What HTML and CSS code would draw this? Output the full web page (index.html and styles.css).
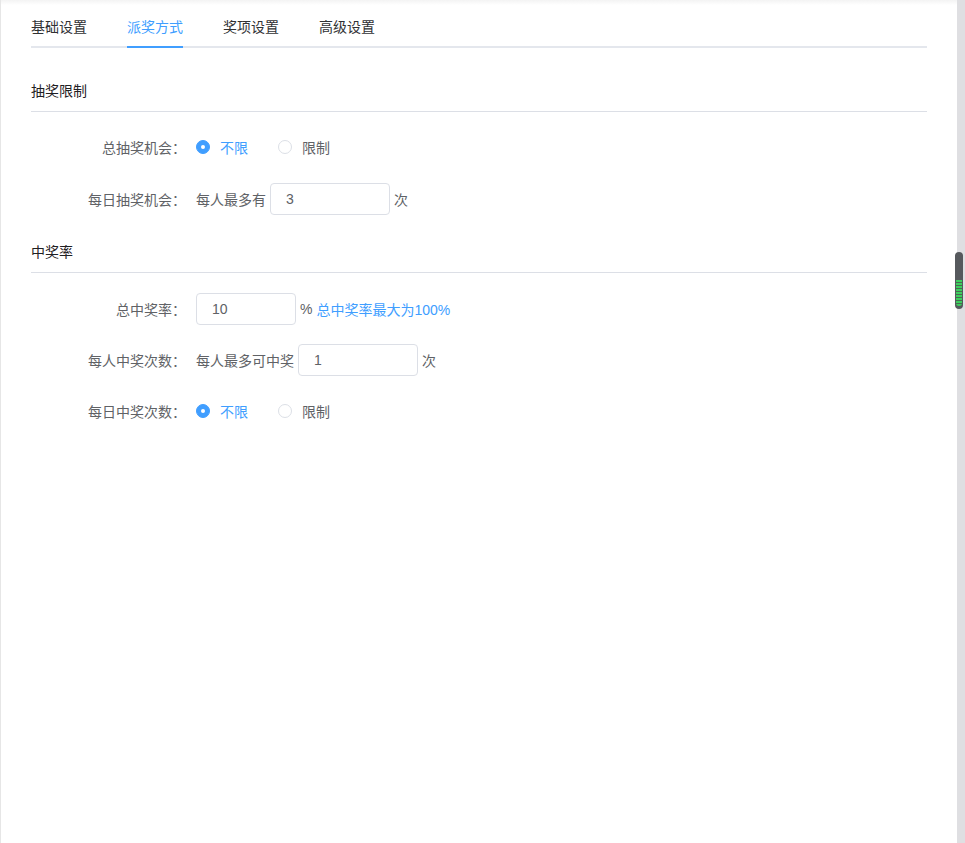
FILE: index.html
```html
<!DOCTYPE html>
<html lang="zh">
<head>
<meta charset="utf-8">
<title>派奖方式</title>
<link rel="stylesheet" href="styles.css">
</head>
<body>
<div class="page">
  <div class="main">
    <div class="tabs">
      <div class="tab">基础设置</div>
      <div class="tab active">派奖方式</div>
      <div class="tab">奖项设置</div>
      <div class="tab">高级设置</div>
    </div>

    <div class="section first">
      <div class="section-title">抽奖限制</div>
      <div class="form-item wide">
        <div class="label">总抽奖机会：</div>
        <div class="content">
          <span class="radio checked"><span class="radio-inner"></span><span class="radio-label">不限</span></span>
          <span class="radio"><span class="radio-inner"></span><span class="radio-label">限制</span></span>
        </div>
      </div>
      <div class="form-item">
        <div class="label">每日抽奖机会：</div>
        <div class="content">
          <span class="text">每人最多有</span>
          <input class="input" type="text" value="3">
          <span class="text">次</span>
        </div>
      </div>
    </div>

    <div class="section second">
      <div class="section-title">中奖率</div>
      <div class="form-item">
        <div class="label">总中奖率：</div>
        <div class="content">
          <input class="input short" type="text" value="10">
          <span class="text">%</span>
          <span class="tip">总中奖率最大为100%</span>
        </div>
      </div>
      <div class="form-item">
        <div class="label">每人中奖次数：</div>
        <div class="content">
          <span class="text">每人最多可中奖</span>
          <input class="input" type="text" value="1">
          <span class="text">次</span>
        </div>
      </div>
      <div class="form-item">
        <div class="label">每日中奖次数：</div>
        <div class="content">
          <span class="radio checked"><span class="radio-inner"></span><span class="radio-label">不限</span></span>
          <span class="radio"><span class="radio-inner"></span><span class="radio-label">限制</span></span>
        </div>
      </div>
    </div>
  </div>
  <div class="scroll-track">
    <div class="scroll-thumb"><div class="scroll-grip"></div></div>
  </div>
</div>
</body>
</html>
```

FILE: styles.css
```css
* { box-sizing: border-box; }

html, body {
  margin: 0;
  padding: 0;
  height: 100%;
  background: #fff;
}

body {
  font-family: "Liberation Sans", "Noto Sans CJK SC", sans-serif;
  font-size: 14px;
  color: #606266;
}

.page {
  display: flex;
  height: 100vh;
}

.main {
  flex: 1;
  border-left: 1px solid #e6e6e6;
  padding: 0 30px;
  background: linear-gradient(#f3f3f3, #ffffff 5px);
}

.tabs {
  display: flex;
  gap: 40px;
  margin-top: 6px;
  border-bottom: 2px solid #e4e7ed;
}

.tab {
  position: relative;
  height: 40px;
  line-height: 43px;
  color: #303133;
}

.tab.active {
  color: #409eff;
}

.tab.active::after {
  content: "";
  position: absolute;
  left: 0;
  right: 0;
  bottom: -2px;
  height: 2px;
  background: #409eff;
}

.section.first {
  margin-top: 24px;
}

.section-title {
  height: 40px;
  line-height: 39px;
  border-bottom: 1px solid #dcdfe6;
  color: #1f2023;
  margin-bottom: 19px;
}

.section.second .section-title {
  margin-bottom: 20px;
}

.form-item {
  display: flex;
  align-items: center;
  height: 32px;
  margin-bottom: 18px;
}

.form-item.wide {
  margin-bottom: 20px;
}

.section.second .form-item {
  margin-bottom: 19px;
}

.label {
  width: 165px;
  padding-right: 10px;
  text-align: right;
  color: #606266;
  flex-shrink: 0;
}

.content {
  display: flex;
  align-items: center;
  gap: 4px;
}

.text {
  color: #606266;
}

.input {
  width: 120px;
  height: 32px;
  border: 1px solid #dcdfe6;
  border-radius: 4px;
  padding: 0 15px;
  font-family: inherit;
  font-size: 14px;
  color: #606266;
  outline: none;
  background: #fff;
}

.input.short {
  width: 100px;
}

.tip {
  color: #409eff;
}

.radio {
  display: inline-flex;
  align-items: center;
  margin-right: 26px;
  color: #606266;
}

.radio-inner {
  width: 14px;
  height: 14px;
  border: 1px solid #dcdfe6;
  border-radius: 50%;
  background: #fff;
  position: relative;
}

.radio.checked .radio-inner {
  border-color: #409eff;
  background: #409eff;
}

.radio.checked .radio-inner::after {
  content: "";
  position: absolute;
  left: 50%;
  top: 50%;
  width: 4px;
  height: 4px;
  margin: -2px 0 0 -2px;
  border-radius: 50%;
  background: #fff;
}

.radio-label {
  padding-left: 10px;
}

.radio.checked .radio-label {
  color: #409eff;
}

.scroll-track {
  position: relative;
  width: 8px;
  flex-shrink: 0;
  background: #dfdfe2;
}

.scroll-thumb {
  position: absolute;
  left: -2px;
  top: 252px;
  width: 8px;
  height: 57px;
  border-radius: 4px;
  background: #56595d;
}

.scroll-grip {
  position: absolute;
  left: 1px;
  right: 1px;
  top: 28px;
  height: 26px;
  border-radius: 0 0 3px 3px;
  background: repeating-linear-gradient(#3ccf5e 0, #3ccf5e 2px, #4a6a52 2px, #4a6a52 3px);
}
```
